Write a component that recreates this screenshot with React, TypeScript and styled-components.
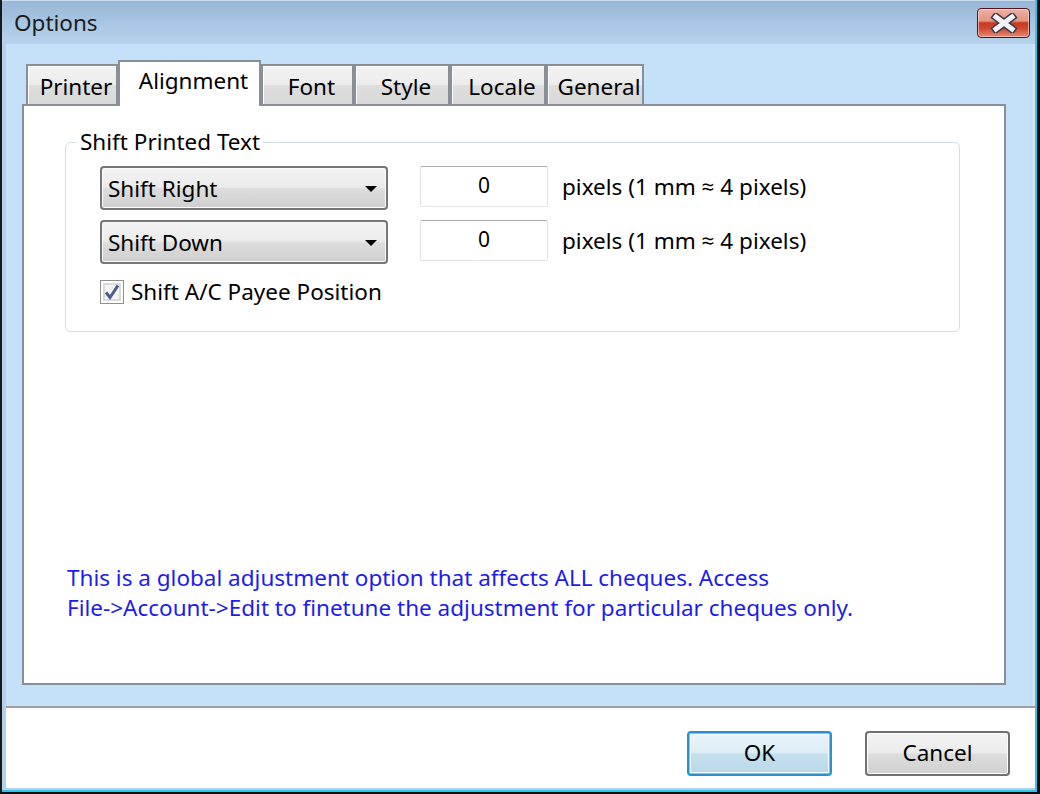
import React from "react";
import styled, { createGlobalStyle } from "styled-components";

const FONT = `"Noto Sans", "Open Sans", "DejaVu Sans", sans-serif`;
const FS = "22.5px";

const GlobalStyle = createGlobalStyle`
  html, body { margin: 0; padding: 0; background: #101010; }
  * { box-sizing: border-box; }
  body { font-family: ${FONT}; font-size: ${FS}; color: #000; }
`;

const Window = styled.div`
  width: 1040px;
  height: 794px;
  display: flex;
  background: #0d0d0d;
  border-left: 2px solid #1a1a1a;
  border-right: 3px solid #0d0d0d;
  border-bottom: 2px solid #0d0d0d;
`;

const Frame = styled.div`
  flex: 1;
  display: flex;
  flex-direction: column;
  border-right: 2px solid #2ec7ec;
  border-bottom: 2px solid #2ec7ec;
  min-width: 0;
`;

const TitleBar = styled.div`
  height: 44px;
  flex: none;
  display: flex;
  align-items: center;
  justify-content: space-between;
  padding: 0 5px 0 12px;
  background: linear-gradient(#98b7d6 0%, #a8c5e2 50%, #b7d2ec 100%);
  border-top: 1px solid #c9dbee;
`;

const Title = styled.span`
  font-size: ${FS};
  color: #1b1b1b;
  margin-top: -1px;
`;

const CloseButton = styled.button`
  width: 53px;
  height: 30px;
  margin-top: 1px;
  padding: 0;
  display: flex;
  align-items: center;
  justify-content: center;
  border: 1px solid #4c1623;
  border-radius: 4px;
  background: linear-gradient(
    #eeb0a4 0%,
    #e59583 42%,
    #c8391f 50%,
    #d14a30 70%,
    #e58b78 100%
  );
  box-shadow: inset 0 0 0 1px rgba(255, 220, 210, 0.6);
`;

const Client = styled.div`
  flex: 1;
  display: flex;
  flex-direction: column;
  border-left: 4px solid #b4d1eb;
  border-bottom: 2px solid #b4d1eb;
  min-height: 0;
`;

const TabArea = styled.div`
  flex: 1;
  display: flex;
  flex-direction: column;
  background: #c5e0f9;
  padding: 16px 27px 21px 16px;
  border-right: 2px solid #d4e8f8;
  min-height: 0;
`;

const TabStrip = styled.div`
  display: flex;
  align-items: flex-end;
  padding-left: 4px;
  height: 46px;
  margin-bottom: -2px;
  position: relative;
  z-index: 1;
`;

const Tab = styled.div<{ $w: number; $active?: boolean }>`
  width: ${(p) => p.$w}px;
  height: ${(p) => (p.$active ? 46 : 40)}px;
  margin-bottom: ${(p) => (p.$active ? 0 : 2)}px;
  display: flex;
  align-items: center;
  justify-content: center;
  padding-top: ${(p) => (p.$active ? 0 : 2)}px;
  padding-bottom: ${(p) => (p.$active ? 8 : 0)}px;
  padding-left: 8px;
  border: 2px solid #898e98;
  border-bottom: none;
  font-size: ${FS};
  color: #000;
  white-space: nowrap;
  background: ${(p) =>
    p.$active
      ? "#ffffff"
      : "linear-gradient(#f3f3f3 0%, #ececec 50%, #dedede 50%, #d8d8d8 100%)"};
  box-shadow: ${(p) => (p.$active ? "none" : "inset 1px 1px 0 #ffffff")};
`;

const Panel = styled.div`
  flex: 1;
  display: flex;
  flex-direction: column;
  background: #ffffff;
  border: 2px solid #898e98;
  padding: 23px 44px 60px 41px;
`;

const Group = styled.fieldset`
  margin: 0;
  padding: 11px 20px 24px 34px;
  border: 1px solid #d5dfe5;
  border-radius: 5px;
  display: flex;
  flex-direction: column;
  gap: 10px;
  min-width: 0;
`;

const Legend = styled.legend`
  margin-left: -23px;
  padding: 0 3px;
  font-size: ${FS};
  line-height: 26px;
`;

const Row = styled.div`
  display: flex;
  align-items: center;
`;

const Combo = styled.div`
  width: 288px;
  height: 44px;
  display: flex;
  align-items: center;
  justify-content: space-between;
  padding: 0 9px 0 6px;
  border: 2px solid #767676;
  border-radius: 4px;
  background: linear-gradient(#f3f3f3 0%, #ebebeb 48%, #dddddd 52%, #cfcfcf 100%);
  box-shadow: inset 0 0 0 1px #fbfbfb;
  font-size: ${FS};
`;

const Arrow = styled.span`
  width: 0;
  height: 0;
  border-left: 6px solid transparent;
  border-right: 6px solid transparent;
  border-top: 6px solid #000;
  margin-top: 2px;
`;

const NumberBox = styled.div`
  width: 128px;
  height: 41px;
  margin-left: 32px;
  margin-top: -3px;
  display: flex;
  align-items: center;
  justify-content: center;
  border: 1px solid #e2e3ea;
  border-top-color: #abadb3;
  border-radius: 2px;
  background: #fff;
  font-size: 21px;
  padding-bottom: 4px;
`;

const Unit = styled.span`
  margin-left: 14px;
  font-size: ${FS};
  margin-top: -3px;
`;

const CheckRow = styled.label`
  display: flex;
  align-items: center;
  gap: 7px;
  margin-top: 2px;
  font-size: ${FS};
`;

const CheckBox = styled.span`
  width: 24px;
  height: 24px;
  display: flex;
  align-items: center;
  justify-content: center;
  border: 1px solid #8f8f8f;
  background: #f4f4f4;
  box-shadow: inset 0 0 0 2px #ffffff, inset 0 0 0 4px #dadada;
`;

const Note = styled.p`
  margin: auto 0 0 2px;
  color: #1c1cf0;
  font-size: ${FS};
  line-height: 30px;
`;

const ButtonBar = styled.div`
  height: 82px;
  flex: none;
  display: flex;
  justify-content: flex-end;
  align-items: flex-start;
  gap: 33px;
  padding: 23px 25px 0 0;
  background: #ffffff;
  border-top: 2px solid #a0a0a0;
`;

const Button = styled.button<{ $default?: boolean }>`
  width: 145px;
  height: 45px;
  font-family: ${FONT};
  font-size: ${FS};
  color: #000;
  border-radius: 4px;
  padding: 0 0 3px;
  border: 2px solid ${(p) => (p.$default ? "#2b8fd0" : "#707070")};
  background: ${(p) =>
    p.$default
      ? "linear-gradient(#eaf5fb 0%, #dcecf5 48%, #c4e0ee 52%, #b8d8e9 100%)"
      : "linear-gradient(#f3f3f3 0%, #ebebeb 48%, #dddddd 52%, #d0d0d0 100%)"};
  box-shadow: ${(p) =>
    p.$default
      ? "inset 0 0 0 1px #3ee0ff, inset 0 0 0 2px #f4fbff"
      : "inset 0 0 0 1px #fbfbfb"};
`;

const tabs = [
  { label: "Printer", w: 92 },
  { label: "Alignment", w: 143, active: true },
  { label: "Font", w: 93 },
  { label: "Style", w: 96 },
  { label: "Locale", w: 96 },
  { label: "General", w: 98 },
];

export default function App() {
  return (
    <>
      <GlobalStyle />
      <Window>
        <Frame>
          <TitleBar>
            <Title>Options</Title>
            <CloseButton aria-label="Close">
              <svg width="28" height="20" viewBox="0 0 28 20">
                <path
                  d="M6 4 L22 16 M22 4 L6 16"
                  stroke="#3a3a4e"
                  strokeWidth="8"
                  strokeLinecap="square"
                  fill="none"
                />
                <path
                  d="M6 4 L22 16 M22 4 L6 16"
                  stroke="#f4f4f6"
                  strokeWidth="5"
                  strokeLinecap="square"
                  fill="none"
                />
              </svg>
            </CloseButton>
          </TitleBar>
          <Client>
            <TabArea>
              <TabStrip>
                {tabs.map((t) => (
                  <Tab key={t.label} $w={t.w} $active={t.active}>
                    {t.label}
                  </Tab>
                ))}
              </TabStrip>
              <Panel>
                <Group>
                  <Legend>Shift Printed Text</Legend>
                  <Row>
                    <Combo>
                      <span>Shift Right</span>
                      <Arrow />
                    </Combo>
                    <NumberBox>0</NumberBox>
                    <Unit>pixels (1 mm ≈ 4 pixels)</Unit>
                  </Row>
                  <Row>
                    <Combo>
                      <span>Shift Down</span>
                      <Arrow />
                    </Combo>
                    <NumberBox>0</NumberBox>
                    <Unit>pixels (1 mm ≈ 4 pixels)</Unit>
                  </Row>
                  <CheckRow>
                    <CheckBox>
                      <svg width="18" height="18" viewBox="0 0 18 18">
                        <path
                          d="M3 9.5 L7 14.5 L15 2.5"
                          stroke="#4a5d92"
                          strokeWidth="3"
                          fill="none"
                        />
                      </svg>
                    </CheckBox>
                    Shift A/C Payee Position
                  </CheckRow>
                </Group>
                <Note>
                  This is a global adjustment option that affects ALL cheques. Access
                  <br />
                  File-&gt;Account-&gt;Edit to finetune the adjustment for particular cheques only.
                </Note>
              </Panel>
            </TabArea>
            <ButtonBar>
              <Button $default>OK</Button>
              <Button>Cancel</Button>
            </ButtonBar>
          </Client>
        </Frame>
      </Window>
    </>
  );
}
